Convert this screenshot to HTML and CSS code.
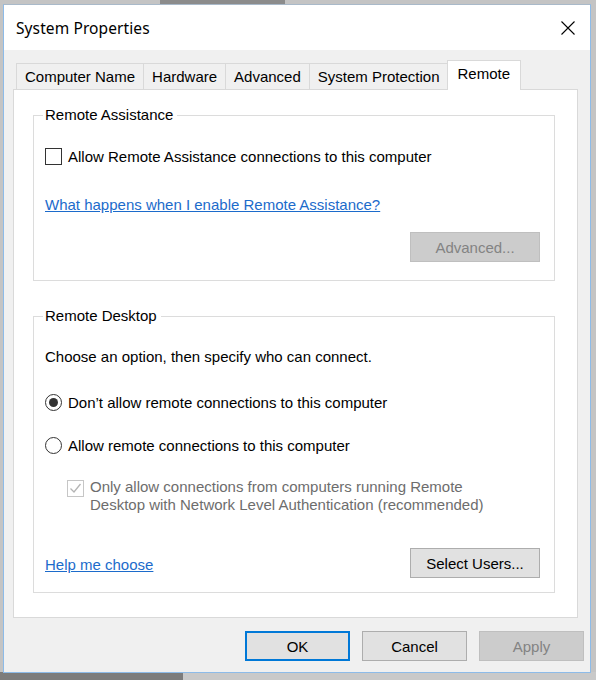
FILE: index.html
```html
<!DOCTYPE html>
<html lang="en">
<head>
<meta charset="utf-8">
<title>System Properties</title>
<link rel="stylesheet" href="styles.css">
</head>
<body>
<div class="window">
  <div class="titlebar">
    <span class="title">System Properties</span>
    <svg class="close" width="16" height="16" viewBox="0 0 16 16"><path d="M1.5 1.5 L14.5 14.5 M14.5 1.5 L1.5 14.5" stroke="#000" stroke-width="1.1" fill="none"/></svg>
  </div>
  <div class="client">
    <div class="tabs">
      <div class="tab">Computer Name</div>
      <div class="tab">Hardware</div>
      <div class="tab">Advanced</div>
      <div class="tab">System Protection</div>
      <div class="tab tab-active">Remote</div>
    </div>
    <div class="panel">
      <fieldset class="group group-first">
        <legend>Remote Assistance</legend>
        <div class="check-row"><span class="checkbox"></span><span>Allow Remote Assistance connections to this computer</span></div>
        <a class="link link-help" href="#">What happens when I enable Remote Assistance?</a>
        <div class="btn-row"><button class="btn btn-wide btn-disabled">Advanced...</button></div>
      </fieldset>
      <fieldset class="group group-second">
        <legend>Remote Desktop</legend>
        <p class="intro">Choose an option, then specify who can connect.</p>
        <div class="radio-row radio-row-first"><span class="radio radio-on"></span><span>Don’t allow remote connections to this computer</span></div>
        <div class="radio-row radio-row-second"><span class="radio"></span><span>Allow remote connections to this computer</span></div>
        <div class="nla-row">
          <span class="checkbox checkbox-disabled"><svg width="15" height="15" viewBox="0 0 15 15"><path d="M2.5 7.5 L6 11 L12.5 3" stroke="#b4b4b4" stroke-width="1.3" fill="none"/></svg></span>
          <span class="nla-text">Only allow connections from computers running Remote<br>Desktop with Network Level Authentication (recommended)</span>
        </div>
        <div class="bottom-row">
          <a class="link link-choose" href="#">Help me choose</a>
          <button class="btn btn-wide">Select Users...</button>
        </div>
      </fieldset>
    </div>
    <div class="dialog-buttons">
      <button class="btn btn-default">OK</button>
      <button class="btn">Cancel</button>
      <button class="btn btn-disabled">Apply</button>
    </div>
  </div>
</div>
</body>
</html>
```
FILE: styles.css
```css
html, body {
  margin: 0;
  padding: 0;
}
body {
  width: 596px;
  height: 680px;
  overflow: hidden;
  font-family: "Liberation Sans", Arial, sans-serif;
  font-size: 15px;
  color: #000;
  background:
    linear-gradient(90deg, transparent 160px, #8c8c8c 160px, #8c8c8c 285px, transparent 285px) top left / 100% 4px no-repeat,
    linear-gradient(90deg, #7c7c7c 183px, #c9c9c9 183px) bottom left / 100% 8px no-repeat,
    #c4c4c4;
  padding-top: 4px;
  box-sizing: border-box;
}
.window {
  margin-left: 3px;
  width: 588px;
  height: 669px;
  box-sizing: border-box;
  border: 1px solid #8dbbe8;
  border-top-color: #a9b9c9;
  background: #f0f0f0;
  display: flex;
  flex-direction: column;
}
.titlebar {
  height: 45px;
  background: #fff;
  display: flex;
  align-items: center;
  justify-content: space-between;
  padding: 0 14px 0 12px;
  flex: none;
}
.title {
  font-family: "Noto Sans", "Open Sans", sans-serif;
  font-size: 15.5px;
  color: #000;
  letter-spacing: 0.1px;
}
.close {
  display: block;
  margin-right: 0;
}
.client {
  padding: 10px 6px 0 9px;
  flex: 1;
}
.tabs {
  display: flex;
  align-items: flex-end;
  margin-left: 3px;
  height: 29px;
}
.tab {
  height: 26px;
  box-sizing: border-box;
  border: 1px solid #d9d9d9;
  border-bottom: none;
  background: #f0f0f0;
  padding: 0 8px;
  line-height: 25px;
  white-space: nowrap;
  margin-left: -1px;
}
.tab:first-child {
  margin-left: 0;
}
.tab-active {
  position: relative;
  z-index: 1;
  height: 30px;
  margin-bottom: -1px;
  margin-left: -2px;
  margin-right: -2px;
  padding: 0 10px;
  background: #fff;
  line-height: 26px;
}
.panel {
  width: 565px;
  box-sizing: border-box;
  background: #fff;
  border: 1px solid #d9d9d9;
  padding: 16px 22px 24px 19px;
}
.group {
  margin: 0;
  padding: 0 14px 18px 11px;
  border: 1px solid #dcdcdc;
  min-inline-size: 0;
}
.group legend {
  padding: 0 4px 0 2px;
  margin-left: -2px;
  line-height: 18px;
}
.group-second {
  margin-top: 26px;
  padding-bottom: 14px;
}
.check-row,
.radio-row {
  display: flex;
  align-items: center;
  height: 18px;
  gap: 6px;
}
.check-row {
  margin-top: 23px;
}
.checkbox {
  width: 17px;
  height: 17px;
  box-sizing: border-box;
  border: 1px solid #333;
  background: #fff;
  flex: none;
  display: flex;
  align-items: center;
  justify-content: center;
}
.checkbox-disabled {
  border-color: #c6c6c6;
  margin-top: 2px;
}
.checkbox-disabled svg {
  display: block;
}
.link {
  color: #1c6bcb;
  text-decoration: underline;
  line-height: 18px;
}
.link-help {
  display: block;
  margin-top: 31px;
  width: max-content;
}
.btn-row {
  display: flex;
  justify-content: flex-end;
  margin-top: 18px;
}
.btn {
  font-family: "Liberation Sans", Arial, sans-serif;
  font-size: 15px;
  color: #000;
  width: 105px;
  height: 30px;
  box-sizing: border-box;
  background: #e1e1e1;
  border: 1px solid #adadad;
  padding: 0;
  margin: 0;
}
.btn-wide {
  width: 130px;
}
.btn-disabled {
  background: #cccccc;
  border-color: #bfbfbf;
  color: #838383;
}
.btn-default {
  border: 2px solid #0078d7;
}
.intro {
  margin: 23px 0 0;
  line-height: 18px;
}
.radio {
  width: 17px;
  height: 17px;
  box-sizing: border-box;
  border: 1px solid #333;
  border-radius: 50%;
  background: #fff;
  flex: none;
  display: flex;
  align-items: center;
  justify-content: center;
}
.radio-on::after {
  content: "";
  width: 9px;
  height: 9px;
  border-radius: 50%;
  background: #333;
}
.radio-row-first {
  margin-top: 27px;
}
.radio-row-second {
  margin-top: 25px;
}
.nla-row {
  display: flex;
  align-items: flex-start;
  gap: 6px;
  margin-top: 24px;
  margin-left: 22px;
}
.nla-text {
  color: #6d6d6d;
  line-height: 18px;
}
.bottom-row {
  display: flex;
  justify-content: space-between;
  align-items: flex-end;
  margin-top: 34px;
}
.link-choose {
  margin-bottom: 4px;
}
.dialog-buttons {
  display: flex;
  justify-content: flex-end;
  gap: 12px;
  margin-top: 13px;
}
```
